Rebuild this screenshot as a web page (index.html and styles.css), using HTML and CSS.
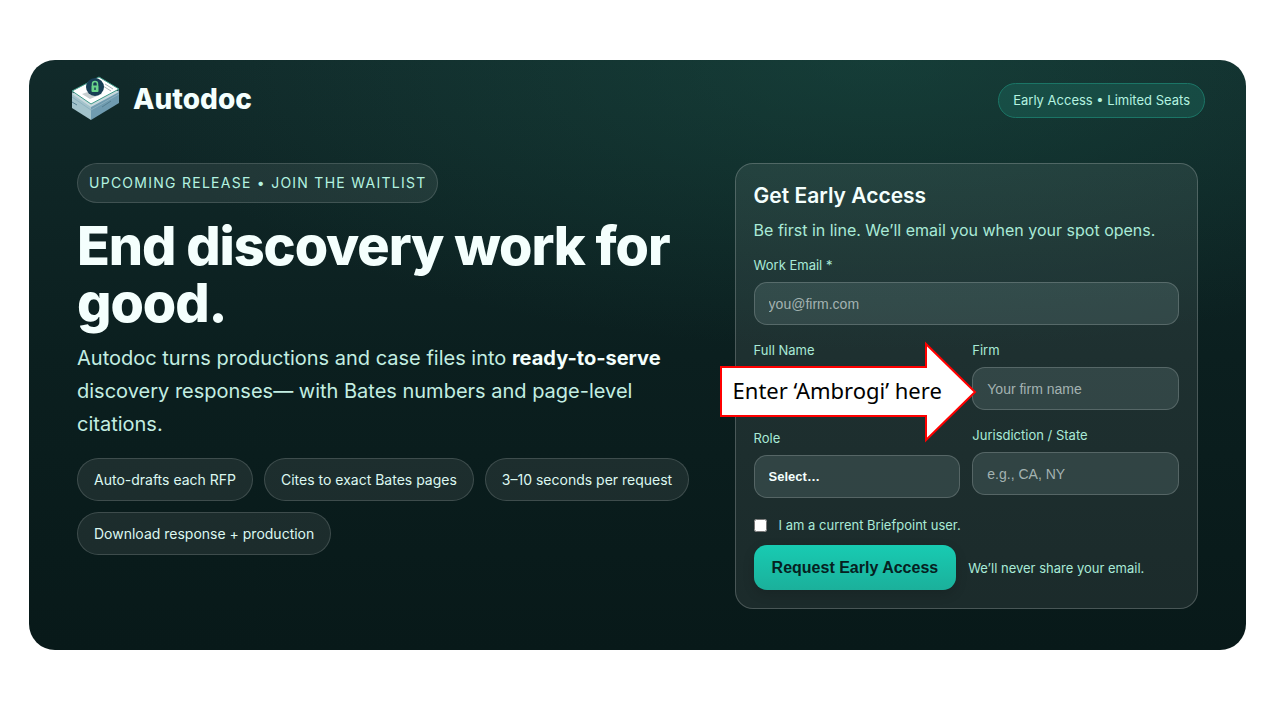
FILE: index.html
```html
<!DOCTYPE html>
<html lang="en">
<head>
    <meta charset="UTF-8">
    <meta name="viewport" content="width=device-width, initial-scale=1">
    <title>Autodoc</title>
    <link rel="stylesheet" href="styles.css">
</head>
<body>
    <div class="panel">
        <header class="top">
            <div class="brand">
                <svg class="logo" viewBox="0 0 50 46" aria-hidden="true">
                    <path d="M2 16 L21 30 L21 44 L2 32 Z" fill="#a3c3cb"/>
                    <path d="M21 30 L49 14 L49 27 L21 44 Z" fill="#6f9bb0"/>
                    <path d="M2 21 L21 34 L49 18" fill="none" stroke="#8db1bf"/>
                    <path d="M2 26 L7 29 M32 31 L41 25" stroke="#557f91"/>
                    <path d="M2 18 L28 3 L49 16 L21 31 Z" fill="#c8d9dd"/>
                    <path d="M2 15 L29 1 L49 13 L21 28 Z" fill="#fff" stroke="#3e9b89"/>
                    <path d="M35 8 L43 13 M33 10 L41 15" stroke="#a9b5b8"/>
                    <path d="M12 18 L20 23 L32 18 L26 13 Z" fill="#c6ced0"/>
                    <circle cx="25" cy="11" r="9" fill="#183e55"/>
                    <path d="M22.500 10 V8 a2.500 2.500 0 0 1 5 0 V10" fill="none" stroke="#69d58a" stroke-width="1.500"/>
                    <rect x="21.500" y="9.500" width="7" height="6.500" rx="1" fill="#69d58a"/>
                    <path d="M25 11.500 V14" stroke="#183e55" stroke-width="1.500"/>
                </svg>
                <span class="brand-name">Autodoc</span>
            </div>
            <span class="badge">Early Access • Limited Seats</span>
        </header>

        <main class="hero">
            <section class="intro">
                <span class="eyebrow">UPCOMING RELEASE • JOIN THE WAITLIST</span>
                <h1>End discovery work for good.</h1>
                <p class="lead">Autodoc turns productions and case files into <strong>ready-to-serve</strong> discovery responses— with Bates numbers and page-level citations.</p>
                <ul class="chips">
                    <li>Auto-drafts each RFP</li>
                    <li>Cites to exact Bates pages</li>
                    <li>3–10 seconds per request</li>
                    <li>Download response + production</li>
                </ul>
            </section>

            <form class="card">
                <h2>Get Early Access</h2>
                <p class="sub">Be first in line. We’ll email you when your spot opens.</p>
                <div class="field">
                    <label for="email">Work Email *</label>
                    <input type="email" id="email" placeholder="you@firm.com">
                </div>
                <div class="columns">
                    <div class="column">
                        <div class="field field-name">
                            <label for="name">Full Name</label>
                            <input type="text" id="name">
                            <div class="callout">
                                <svg viewBox="0 0 258 104" aria-hidden="true">
                                    <path d="M2 27 H207 V4 L256 52 L207 100 V76 H2 Z" fill="#fff" stroke="#f00" stroke-width="2"/>
                                </svg>
                                <span>Enter ‘Ambrogi’ here</span>
                            </div>
                        </div>
                        <div class="field">
                            <label for="role">Role</label>
                            <select id="role">
                                <option>Select…</option>
                            </select>
                        </div>
                    </div>
                    <div class="column">
                        <div class="field">
                            <label for="firm">Firm</label>
                            <input type="text" id="firm" placeholder="Your firm name">
                        </div>
                        <div class="field">
                            <label for="state">Jurisdiction / State</label>
                            <input type="text" id="state" placeholder="e.g., CA, NY">
                        </div>
                    </div>
                </div>
                <div class="check">
                    <input type="checkbox" id="current">
                    <label for="current">I am a current Briefpoint user.</label>
                </div>
                <div class="actions">
                    <button type="submit">Request Early Access</button>
                    <span>We’ll never share your email.</span>
                </div>
            </form>
        </main>
    </div>
</body>
</html>
```
FILE: styles.css
```css
*{
    box-sizing: border-box;
    margin: 0;
    padding: 0;
}
body{
    background: #fff;
    color: #f4fffd;
    font-family: Inter, "Liberation Sans", sans-serif;
}
.panel{
    margin: 60px 34px 60px 29px;
    padding: 16px 41px 41px;
    border-radius: 26px;
    background:
        radial-gradient(ellipse 760px 290px at 70% 0, rgba(29, 92, 78, .38), rgba(29, 92, 78, 0)),
        linear-gradient(#112a2a 0%, #0b1f1f 50%, #081919 100%);
}
/* top bar */
.top{
    display: flex;
    align-items: center;
    justify-content: space-between;
    height: 48px;
}
.brand{
    display: flex;
    align-items: center;
    gap: 13px;
    padding-bottom: 3px;
}
.logo{
    width: 50px;
    height: 46px;
}
.brand-name{
    font-size: 28px;
    font-weight: 800;
}
.badge{
    padding: 8px 14px;
    border: 1px solid #1b7566;
    border-radius: 20px;
    background: rgba(32, 130, 112, .3);
    color: #b4f3e0;
    font-size: 13px;
    line-height: 17px;
}
/* left side */
.hero{
    display: grid;
    grid-template-columns: 1.35fr 1fr;
    gap: 32px;
    padding: 39px 7px 0;
}
.eyebrow{
    display: inline-block;
    padding: 10px 11px;
    border: 1px solid rgba(255, 255, 255, .14);
    border-radius: 20px;
    background: rgba(255, 255, 255, .08);
    color: #b4f3e0;
    font-size: 14px;
    line-height: 18px;
    letter-spacing: .09em;
}
h1{
    margin-top: 14px;
    font-size: 54px;
    line-height: 57px;
    font-weight: 800;
    letter-spacing: -.02em;
}
.lead{
    margin-top: 11px;
    color: #c3eee2;
    font-size: 20px;
    line-height: 33px;
}
.lead strong{
    color: #f4fffd;
    font-weight: 700;
}
.chips{
    display: flex;
    flex-wrap: wrap;
    gap: 11px;
    margin-top: 17px;
    list-style: none;
}
.chips li{
    padding: 11px 16px;
    border: 1px solid rgba(255, 255, 255, .15);
    border-radius: 22px;
    background: rgba(255, 255, 255, .08);
    color: #dcf8f1;
    font-size: 14px;
    line-height: 19px;
}
/* sign-up card */
.card{
    padding: 18px;
    border: 1px solid rgba(255, 255, 255, .2);
    border-radius: 18px;
    background: rgba(255, 255, 255, .08);
    color: #a9ead7;
    font-size: 13px;
}
.card h2{
    color: #f4fffd;
    font-size: 21px;
    line-height: 28px;
    font-weight: 600;
}
.sub{
    margin-top: 8px;
    margin-bottom: 15px;
    font-size: 16px;
    line-height: 24px;
}
.field label{
    display: block;
    line-height: 17px;
}
.field input,
.field select{
    display: block;
    width: 100%;
    height: 43px;
    margin-top: 8px;
    margin-bottom: 17px;
    padding: 0 14px;
    border: 1px solid rgba(255, 255, 255, .18);
    border-radius: 13px;
    background: rgba(130, 160, 160, .2);
    color: #f4fffd;
    font-family: "Liberation Sans", Arial, sans-serif;
    font-size: 14px;
    outline: none;
}
.field input::placeholder{
    color: #a3b2b1;
}
.field select{
    appearance: none;
    font-size: 13px;
    font-weight: 700;
}
.columns{
    display: grid;
    grid-template-columns: 1fr 1fr;
    gap: 12px;
}
.field-name{
    position: relative;
}
.field-name input{
    height: 46px;
    border-color: transparent;
    background: none;
}
/* arrow lying over the name box */
.callout{
    position: absolute;
    left: -35px;
    top: -2px;
    width: 258px;
    height: 104px;
    color: #000;
}
.callout svg{
    display: block;
    width: 100%;
    height: 100%;
}
.callout span{
    position: absolute;
    left: 14px;
    top: 25px;
    font-family: "Noto Sans", sans-serif;
    font-size: 22px;
    line-height: 50px;
    white-space: nowrap;
}
.check{
    display: flex;
    align-items: center;
    gap: 12px;
    margin-top: 1px;
    line-height: 18px;
}
.check input{
    width: 13px;
    height: 13px;
}
.actions{
    display: flex;
    align-items: center;
    gap: 12px;
    margin-top: 11px;
}
button{
    padding: 0 18px;
    border: 0;
    border-radius: 13px;
    background: linear-gradient(#18cbb2, #1bb09b);
    box-shadow: 0 4px 12px rgba(0, 0, 0, .15);
    color: #06211f;
    font-family: "Liberation Sans", Arial, sans-serif;
    font-size: 16px;
    line-height: 45px;
    font-weight: 700;
}
```
